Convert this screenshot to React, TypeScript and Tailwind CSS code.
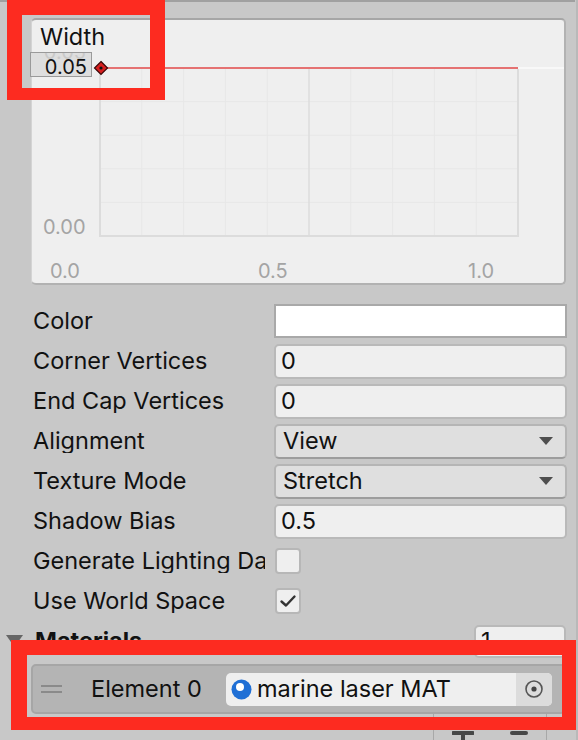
import React from "react";

const font = "font-['Inter','Noto_Sans',sans-serif]";

function Label({ children }: { children: React.ReactNode }) {
  return (
    <div className="w-[274px] pl-[33px] text-[23.5px] leading-none text-[#111]">
      <div className="w-[232px] overflow-hidden whitespace-nowrap">{children}</div>
    </div>
  );
}

function IntField({ value }: { value: string }) {
  return (
    <div className="w-[293px] h-[35px] rounded-[5px] bg-[#efefef] border-2 border-[#b9b9b9] flex items-center pl-[5px] text-[23.5px] leading-none text-[#111]">
      {value}
    </div>
  );
}

function Dropdown({ value }: { value: string }) {
  return (
    <div className="w-[293px] h-[35px] rounded-[5px] bg-[#dfdfdf] border-2 border-[#b5b5b5] border-b-[#9d9d9d] flex items-center justify-between pl-[7px] pr-[12px] text-[23.5px] leading-none text-[#111]">
      <span>{value}</span>
      <svg width="14" height="8" viewBox="0 0 14 8">
        <path d="M0 0 H14 L7 8 Z" fill="#4e4e4e" />
      </svg>
    </div>
  );
}

function Checkbox({ checked }: { checked?: boolean }) {
  return (
    <div className="ml-[1px] w-[26px] h-[26px] rounded-[4px] bg-[#efefef] border-2 border-[#b7b7b7] flex items-center justify-center">
      {checked && (
        <svg width="18" height="18" viewBox="0 0 18 18">
          <path d="M2.5 9.5 L7 13.5 L15.5 4.5" fill="none" stroke="#333" strokeWidth="2.4" strokeLinecap="round" strokeLinejoin="round" />
        </svg>
      )}
    </div>
  );
}

function Row({ children }: { children: React.ReactNode }) {
  return <div className="h-[40px] flex items-center">{children}</div>;
}

export default function App() {
  const minorX = [1, 2, 3, 4, 6, 7, 8, 9].map((k) => 68 + 41.8 * k);
  const minorY = [1, 2, 3, 4].map((k) => 48 + 33.6 * k);
  return (
    <div className={`relative w-[578px] h-[740px] overflow-hidden bg-[#c8c8c8] border-r-2 border-r-[#b9b9b9] ${font}`}>
      <div className="h-[2px] w-[575px] bg-[#a0a0a0]" />

      {/* Curve panel */}
      <div className="relative ml-[31px] mt-[16px] w-[535px] h-[267px] rounded-[5px] bg-[#efefef] border-t-2 border-t-[#a6a6a6] border-r-2 border-r-[#b2b2b2] border-b-2 border-b-[#b2b2b2] border-l border-l-[#d4d4d4]">
        <svg className="absolute left-0 top-0" width="532" height="263" viewBox="0 0 532 263">
          {minorX.map((x) => (
            <line key={"x" + x} x1={x} y1={48} x2={x} y2={216} stroke="#e7e7e7" strokeWidth="1" />
          ))}
          {minorY.map((y) => (
            <line key={"y" + y} x1={68} y1={y} x2={486} y2={y} stroke="#e7e7e7" strokeWidth="1" />
          ))}
          <line x1={277} y1={48} x2={277} y2={216} stroke="#dcdcdc" strokeWidth="1.5" />
          <line x1={68} y1={48} x2={68} y2={217} stroke="#dcdcdc" strokeWidth="2" />
          <line x1={486} y1={48} x2={486} y2={217} stroke="#dcdcdc" strokeWidth="2" />
          <line x1={68} y1={216} x2={487} y2={216} stroke="#dcdcdc" strokeWidth="2" />
          <line x1={486} y1={48} x2={532} y2={48} stroke="#f8f8f8" strokeWidth="2" />
          <line x1={68} y1={48} x2={486} y2={48} stroke="#e57272" strokeWidth="2" />
          <path d="M69 41.5 L75.5 48 L69 54.5 L62.5 48 Z" fill="#d71f1f" stroke="#3a0606" strokeWidth="1.2" />
          <circle cx="69" cy="48" r="1.6" fill="#111" />
        </svg>

        <div className="absolute left-[8px] top-[5px] h-[23px] flex items-center text-[23.5px] leading-none text-[#111]">Width</div>

        <div className="absolute left-[-2px] top-[32px] w-[62px] h-[25px] overflow-hidden border border-[#9a9a9a] bg-[#dedede]">
          <span className="absolute right-[5px] top-[-11px] text-[20px] leading-none text-[#c9c9c9]">0.05</span>
          <div className="absolute inset-0 top-[5px] flex items-center justify-end pr-[4px] text-[20px] leading-none text-[#111]">0.05</div>
        </div>

        <div className="absolute left-[11px] top-[197px] h-[20px] flex items-center text-[20px] leading-none text-[#a4a4a4]">0.00</div>
        <div className="absolute left-[18px] top-[241px] h-[20px] flex items-center text-[20px] leading-none text-[#a4a4a4]">0.0</div>
        <div className="absolute left-[226px] top-[241px] h-[20px] flex items-center text-[20px] leading-none text-[#a4a4a4]">0.5</div>
        <div className="absolute left-[436px] top-[241px] h-[20px] flex items-center text-[20px] leading-none text-[#a4a4a4]">1.0</div>
      </div>

      {/* Properties */}
      <div className="mt-[16px] flex flex-col">
        <Row>
          <Label>Color</Label>
          <div className="w-[293px] h-[34px] border-2 border-[#a9a9a9] bg-white" />
        </Row>
        <Row>
          <Label>Corner Vertices</Label>
          <IntField value="0" />
        </Row>
        <Row>
          <Label>End Cap Vertices</Label>
          <IntField value="0" />
        </Row>
        <Row>
          <Label>Alignment</Label>
          <Dropdown value="View" />
        </Row>
        <Row>
          <Label>Texture Mode</Label>
          <Dropdown value="Stretch" />
        </Row>
        <Row>
          <Label>Shadow Bias</Label>
          <IntField value="0.5" />
        </Row>
        <Row>
          <Label>Generate Lighting Data</Label>
          <Checkbox />
        </Row>
        <Row>
          <Label>Use World Space</Label>
          <Checkbox checked />
        </Row>
        <div className="h-[40px] flex items-center">
          <svg className="ml-[6px]" width="17" height="12" viewBox="0 0 17 12">
            <path d="M0 0 H17 L8.5 12 Z" fill="#666" />
          </svg>
          <div className="ml-[12px] w-[439px] text-[23.5px] leading-none font-bold text-[#111]">Materials</div>
          <div className="w-[92px] h-[33px] rounded-[5px] bg-[#efefef] border-2 border-[#b9b9b9] flex items-center pl-[5px] text-[23.5px] leading-none text-[#111]">1</div>
        </div>

        {/* List */}
        <div className="ml-[31px] mt-[3px] w-[535px] h-[50px] rounded-[5px] border-2 border-[#a6a6a6] bg-[#b4b4b4] flex items-center">
          <div className="ml-[8px] w-[21px] flex flex-col gap-[4px]">
            <div className="h-[2px] bg-[#8a8a8a]" />
            <div className="h-[2px] bg-[#8a8a8a]" />
          </div>
          <div className="ml-[29px] w-[135px] text-[23.5px] leading-none text-[#111]">Element 0</div>
          <div className="w-[326px] h-[33px] rounded-[5px] bg-[#efefef] flex items-center overflow-hidden">
            <svg className="ml-[5px]" width="21" height="21" viewBox="0 0 21 21">
              <circle cx="10.5" cy="10.5" r="10" fill="#1f6fd5" />
              <circle cx="9" cy="8" r="4" fill="#fff" />
            </svg>
            <span className="ml-[5px] flex-1 text-[23.5px] leading-none text-[#111]">marine laser MAT</span>
            <div className="w-[36px] h-full bg-[#dcdcdc] flex items-center justify-center">
              <svg width="20" height="20" viewBox="0 0 20 20">
                <circle cx="10" cy="10" r="8" fill="none" stroke="#555" strokeWidth="1.6" />
                <circle cx="10" cy="10" r="2.6" fill="#444" />
              </svg>
            </div>
          </div>
        </div>

        <div className="ml-[433px] w-[114px] h-[30px] border-x border-[#a8a8a8] flex items-start justify-around pt-[16px]">
          <svg width="22" height="14" viewBox="0 0 22 14">
            <path d="M1 3 H21 M11 3 V14" stroke="#474747" strokeWidth="4" strokeLinecap="round" />
          </svg>
          <svg width="18" height="6" viewBox="0 0 18 6">
            <path d="M2 3 H16" stroke="#474747" strokeWidth="4" strokeLinecap="round" />
          </svg>
        </div>
      </div>

      {/* Red annotation boxes */}
      <div className="absolute left-[7px] top-0 w-[158px] h-[100px] border-[#fd2b20] border-l-[15px] border-r-[15px] border-t-[15px] border-b-[12px]" />
      <div className="absolute left-[11px] top-[640px] w-[566px] h-[90px] border-[#fd2b20] border-l-[16px] border-r-[15px] border-t-[15px] border-b-[13px]" />
    </div>
  );
}
